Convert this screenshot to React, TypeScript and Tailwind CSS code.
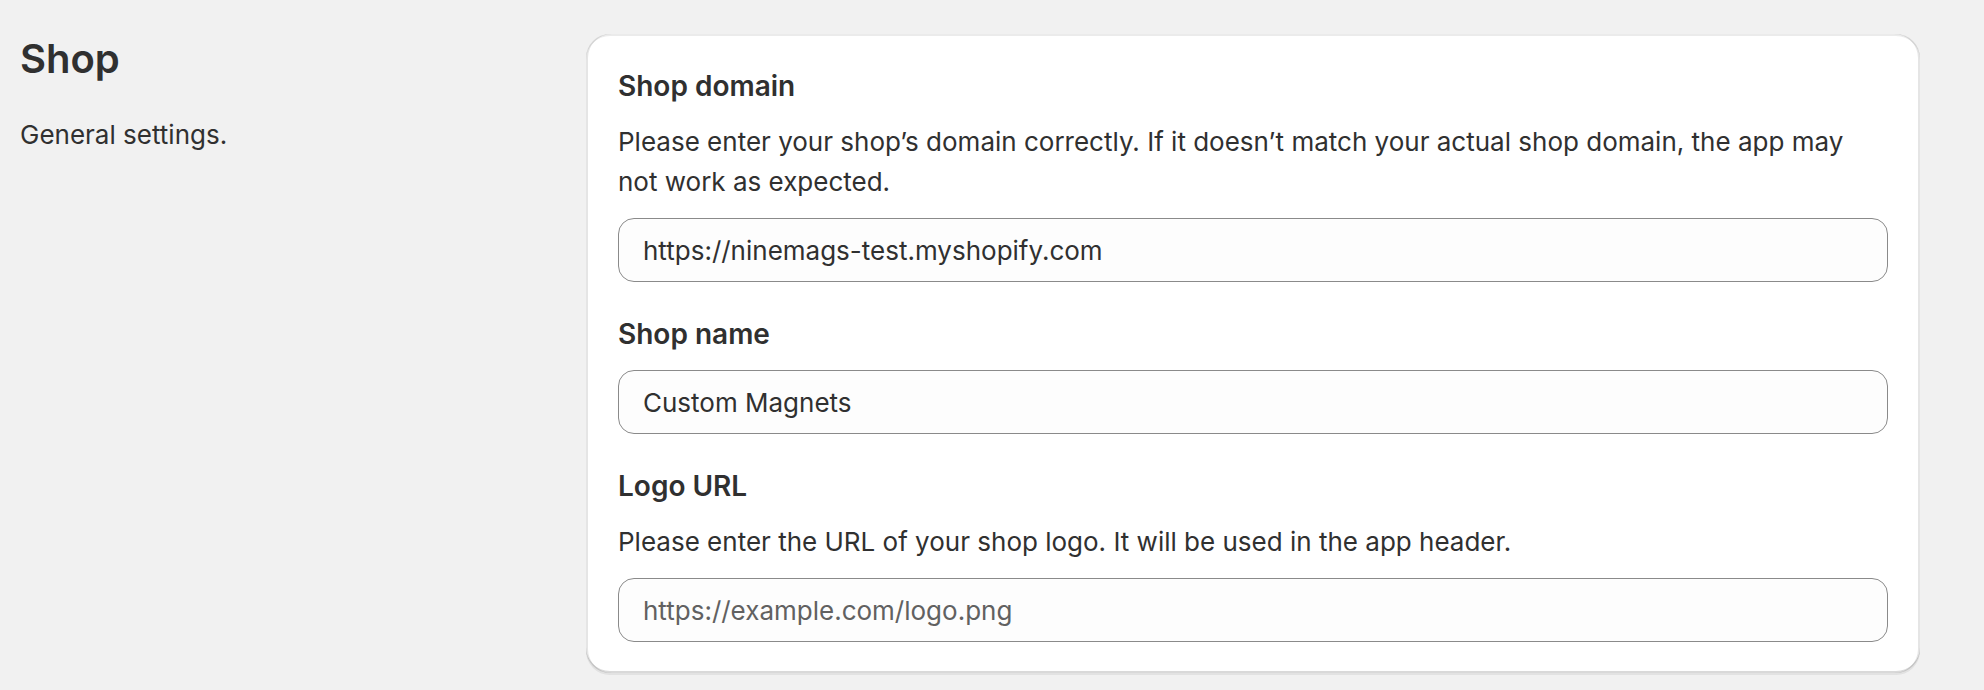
import { useState } from 'react';

const font = { fontFamily: 'Inter, "Noto Sans", sans-serif' };

function Field({
  label,
  help,
  value,
  placeholder,
  onChange,
}: {
  label: string;
  help?: string;
  value: string;
  placeholder?: string;
  onChange: (v: string) => void;
}) {
  return (
    <div className="flex flex-col gap-4">
      <h3 className="text-[28px] leading-[40px] font-semibold text-[#303030]">{label}</h3>
      {help && <p className="text-[26px] leading-[40px] text-[#303030]">{help}</p>}
      <input
        value={value}
        placeholder={placeholder}
        onChange={(e) => onChange(e.target.value)}
        className="h-16 w-full rounded-[16px] border-[1.5px] border-[#8a8a8a] bg-[#fdfdfd] px-6 text-[26px] text-[#303030] outline-none placeholder:text-[#616161]"
      />
    </div>
  );
}

export default function App() {
  const [domain, setDomain] = useState('https://ninemags-test.myshopify.com');
  const [name, setName] = useState('Custom Magnets');
  const [logo, setLogo] = useState('');

  return (
    <div className="min-h-[690px] bg-[#f1f1f1] pt-[34px] pb-4 pl-5 pr-[64px]" style={font}>
      <div className="flex">
        {/* Annotation */}
        <div className="w-[566px] shrink-0 pt-px">
          <h2 className="text-[40px] leading-[48px] font-semibold text-[#303030]">Shop</h2>
          <p className="mt-8 text-[26px] leading-[40px] text-[#303030]">General settings.</p>
        </div>

        {/* Card */}
        <div className="flex flex-1 flex-col gap-8 rounded-[24px] bg-white px-8 pt-8 pb-[31px] shadow-[inset_2px_0_0_rgba(0,0,0,0.1),inset_-2px_0_0_rgba(0,0,0,0.1),inset_0_-2px_0_rgba(0,0,0,0.15),inset_0_2px_0_rgba(204,204,204,0.4),0_2px_0_rgba(26,26,26,0.07)]">
          <Field
            label="Shop domain"
            help="Please enter your shop’s domain correctly. If it doesn’t match your actual shop domain, the app may not work as expected."
            value={domain}
            onChange={setDomain}
          />
          <Field label="Shop name" value={name} onChange={setName} />
          <Field
            label="Logo URL"
            help="Please enter the URL of your shop logo. It will be used in the app header."
            value={logo}
            placeholder="https://example.com/logo.png"
            onChange={setLogo}
          />
        </div>
      </div>
    </div>
  );
}
